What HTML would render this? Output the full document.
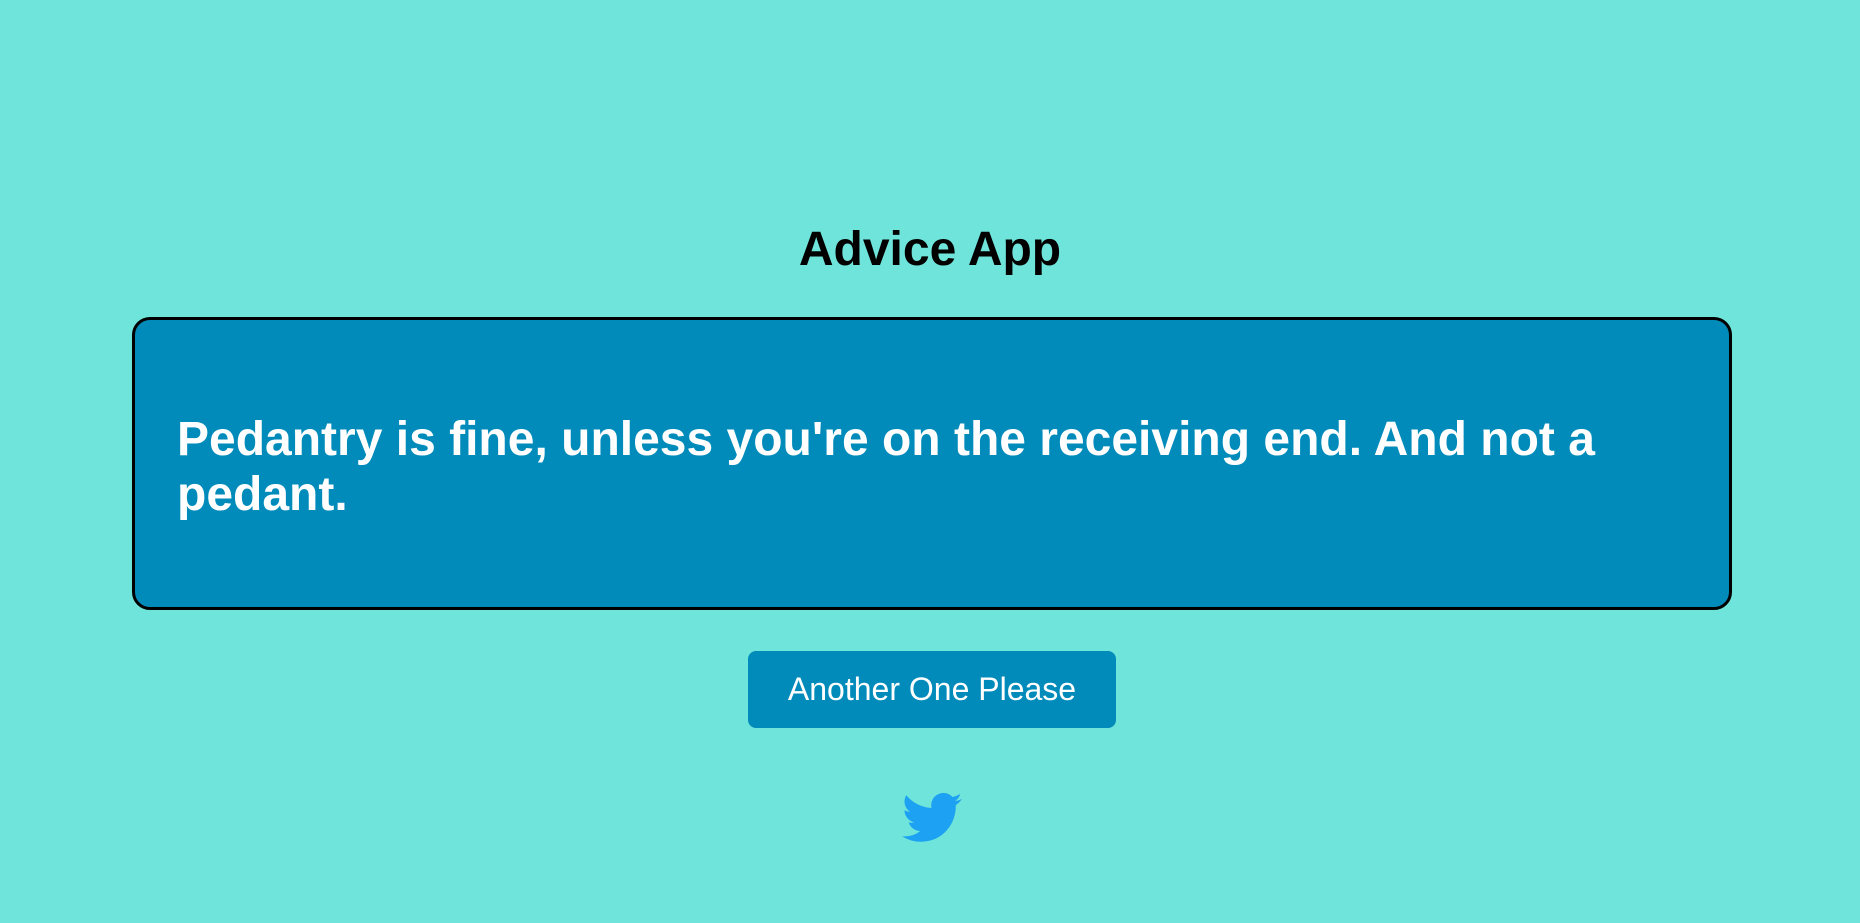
<!DOCTYPE html>
<html><head><meta charset="utf-8"><style>
html,body{margin:0;padding:0;width:1860px;height:923px;background:#6fe4da;overflow:hidden;font-family:"Liberation Sans",Arial,sans-serif}
h1{position:absolute;left:0;width:1860px;top:222px;margin:0;text-align:center;font-size:48px;font-weight:bold;color:#000;line-height:56px}
.box{position:absolute;left:132px;top:317px;width:1594px;height:287px;border:3px solid #000;border-radius:18px;background:#008bba;box-sizing:content-box}
.box p{margin:0;position:absolute;left:42px;top:92px;width:1520px;color:#fff;font-weight:bold;font-size:48px;line-height:55px}
.btn{position:absolute;left:748px;top:651px;width:368px;height:77px;background:#008bba;border-radius:8px;color:#fff;font-size:32px;text-align:center;line-height:77px}
svg{position:absolute;left:902px;top:793px}
</style></head><body>
<h1>Advice App</h1>
<div class="box"><p>Pedantry is fine, unless you're on the receiving end. And not a pedant.</p></div>
<div class="btn">Another One Please</div>
<svg width="60" height="50" viewBox="0 0 24 20"><path fill="#1da1f2" d="M24 2.4a9.8 9.8 0 0 1-2.8.8A4.9 4.9 0 0 0 23.3.4a9.9 9.9 0 0 1-3.1 1.200A4.9 4.9 0 0 0 11.8 6 14 14 0 0 1 1.7.9a4.9 4.9 0 0 0 1.5 6.6A4.9 4.9 0 0 1 1 6.9a4.9 4.9 0 0 0 3.9 4.8 4.9 4.9 0 0 1-2.200.1 4.9 4.9 0 0 0 4.600 3.4A9.9 9.9 0 0 1 0 17.3 14 14 0 0 0 7.5 19.5c9.1 0 14-7.5 14-14v-.6A10 10 0 0 0 24 2.4z"/></svg>
</body></html>
